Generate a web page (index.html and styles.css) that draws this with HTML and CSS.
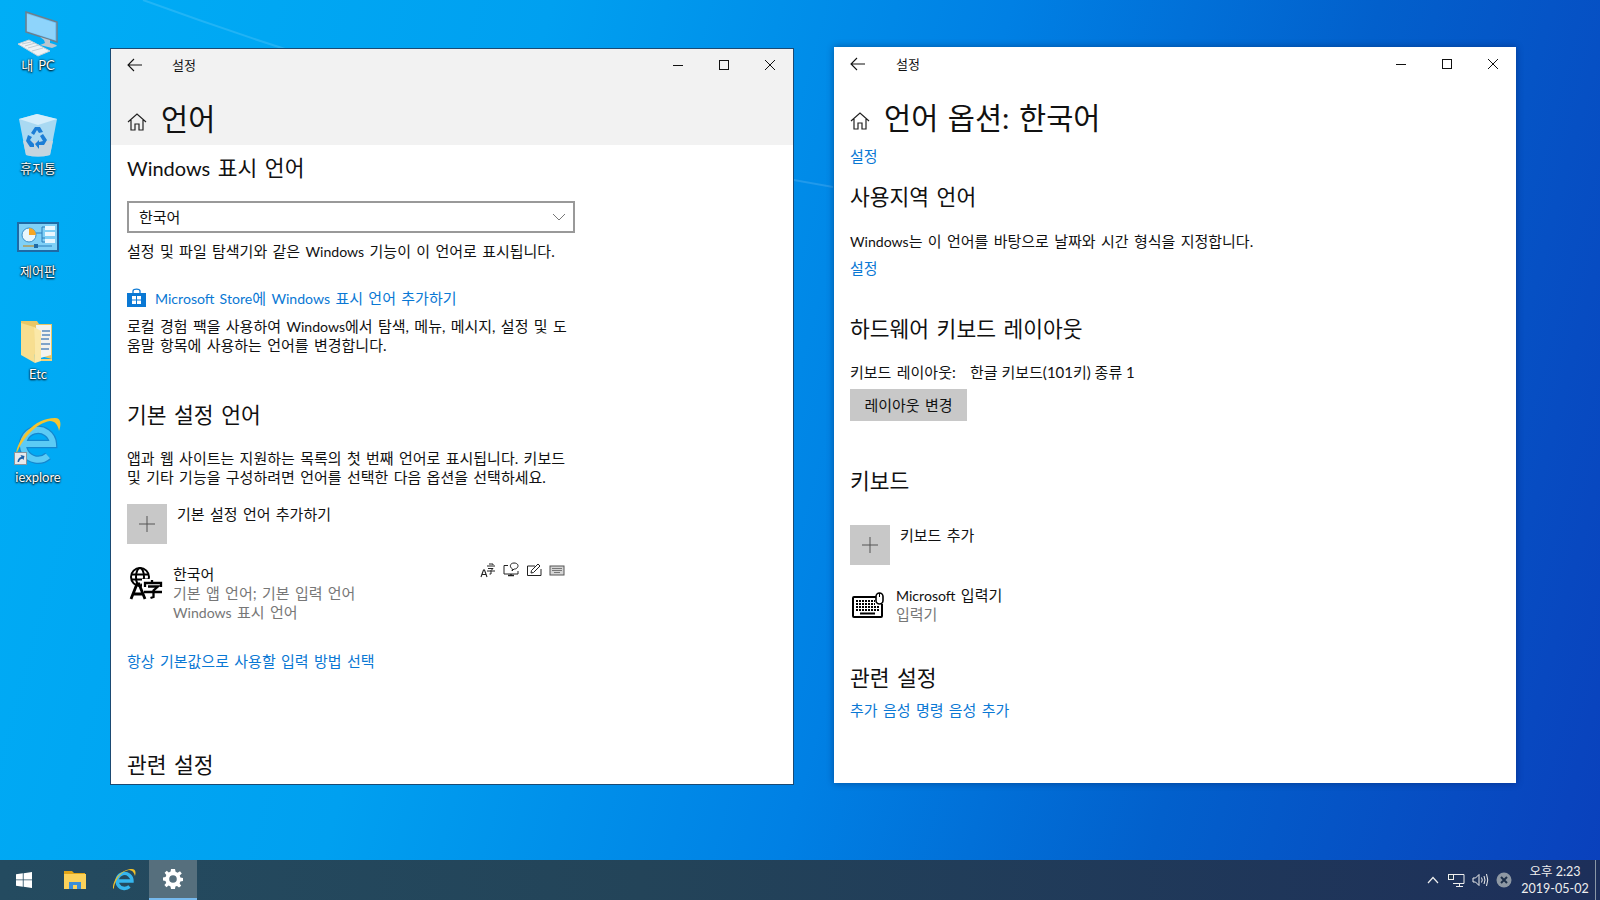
FILE: index.html
```html
<!DOCTYPE html>
<html lang="ko">
<head>
  <meta charset="UTF-8">
  <title>설정 - 언어</title>
  <link rel="stylesheet" href="styles.css">
</head>
<body>
<div class="desktop">
  <svg class="beam" width="1600" height="900" viewBox="0 0 1600 900">
    <path d="M143 0 Q 500 130 833 187" fill="none" stroke="#fff" stroke-opacity="0.13" stroke-width="2"/>
  </svg>

  <!-- 바탕화면 아이콘 -->
  <div class="desk-icons">
    <div class="desk-icon">
      <svg width="48" height="48" viewBox="0 0 48 48">
        <path d="M12 2 L43 12 L43 32 L12 22 Z" fill="#6fc3f7" stroke="#6d7f8c" stroke-width="1.5"/>
        <path d="M13 4 L41 13 L41 30 L13 21 Z" fill="#8ed4fb"/>
        <path d="M26 27 L36 30 L36 33 C40 34 43 35 43 36 L38 38 L26 35 L31 33 L30 30 Z" fill="#b9c6cf"/>
        <path d="M4 34 L15 30 L36 41 L24 46 Z" fill="#eef2f5" stroke="#c6d0d6" stroke-width="1"/>
        <path d="M8 34 L17 32 M11 36 L21 33 M14 38 L25 35 M18 41 L29 38" stroke="#c2cdd4" stroke-width="1"/>
      </svg>
      <span>내 PC</span>
    </div>
    <div class="desk-icon icon-bin">
      <svg width="48" height="48" viewBox="0 0 48 48">
        <path d="M5 8 L23 3 L43 8 L36 44 Q24 47 12 44 Z" fill="#a9d9f2"/>
        <path d="M5 8 L23 3 L43 8 L24 14 Z" fill="#d5eefb"/>
        <path d="M9 30 L39 30 L36 44 Q24 47 12 44 Z" fill="#c4d5df"/>
        <path d="M17 22 L21 16 L26 16 L29 21 L25 22 L23 19 L20 24 Z" fill="#1c7ed6"/>
        <path d="M29 23 L33 29 L30 34 L25 34 L25 38 L21 33 L25 29 L25 31 L29 30 L26 25 Z" fill="#1c7ed6"/>
        <path d="M14 24 L18 26 L16 29 L20 33 L20 36 L16 36 L12 30 Z" fill="#1c7ed6"/>
      </svg>
      <span>휴지통</span>
    </div>
    <div class="desk-icon icon-panel">
      <svg width="48" height="48" viewBox="0 0 48 48">
        <rect x="3" y="8" width="42" height="30" fill="#1f6aa5"/>
        <rect x="5" y="10" width="38" height="26" fill="#7fd0f7"/>
        <circle cx="15" cy="21" r="7" fill="#e8f6fd" stroke="#3a8fc9"/>
        <path d="M15 14 A7 7 0 0 1 22 21 L15 21 Z" fill="#f5a623"/>
        <path d="M22 19 H28 V13 H31 M28 19 V24 H31 M28 24 V28 H31" stroke="#2d7fbc" fill="none"/>
        <rect x="31" y="12" width="10" height="4" fill="#eaf7fe"/>
        <rect x="31" y="18" width="10" height="4" fill="#eaf7fe"/>
        <rect x="31" y="25" width="10" height="4" fill="#eaf7fe"/>
        <path d="M9 32 H38" stroke="#2d7fbc"/>
        <path d="M9 32 H20" stroke="#f5a623"/>
        <rect x="20" y="30" width="4" height="4" fill="#1f6aa5"/>
      </svg>
      <span>제어판</span>
    </div>
    <div class="desk-icon">
      <svg width="48" height="48" viewBox="0 0 48 48">
        <path d="M7 2 L23 2 L25 5 L38 5 L38 40 L7 32 Z" fill="#e9c766"/>
        <path d="M22 6 L37 6 L37 36 L23 40 Z" fill="#f3f3ee"/>
        <path d="M28 12 H36 M28 16 H36 M27 20 H35 M27 25 H36 M27 30 H35" stroke="#7fa4c9" stroke-width="2"/>
        <path d="M7 4 L20 8 L21 44 L7 36 Z" fill="#f7de90"/>
        <path d="M20 8 L27 12 L27 42 L21 44 Z" fill="#fbe8a8"/>
        <path d="M27 40 H38 V42 L27 42 Z" fill="#f2d27a"/>
      </svg>
      <span>Etc</span>
    </div>
    <div class="desk-icon icon-ie">
      <svg width="48" height="48" viewBox="0 0 48 48">
        <path d="M10 27 H39 A15 15 0 1 0 34 39" fill="none" stroke="#1487cf" stroke-width="8.5"/>
        <path d="M10 27 H39 A15 15 0 1 0 34 39" fill="none" stroke="#5ccbf5" stroke-width="6"/>
        <path d="M2 38 C3 22 20 1 41 1 C48 1 47 9 45 14 C44 8 41 4 36 4 C22 6 8 22 2 38 Z" fill="#f4c430"/>
        <rect x="0.5" y="35.5" width="12" height="12" fill="#e6e9ec" stroke="#8a949c"/>
        <path d="M3.5 45 C3.5 42 5.5 40 7.5 40 L6.5 38 L10.5 39 L9.5 43 L8.5 41.8 C7 41.8 5.5 43 5 45 Z" fill="#1a5fa8"/>
      </svg>
      <span>iexplore</span>
    </div>
  </div>

  <!-- 왼쪽 창 -->
  <section class="window window-left">
    <div class="page-head">
      <div class="titlebar">
        <svg class="back" width="16" height="16" viewBox="0 0 16 16"><path d="M7 2 L1 8 L7 14 M1.5 8 H15" fill="none" stroke="#111" stroke-width="1.1"/></svg>
        <span class="title">설정</span>
        <div class="win-buttons">
          <svg width="12" height="12" viewBox="0 0 12 12"><path d="M1 6.5 H11" stroke="#111"/></svg>
          <svg width="12" height="12" viewBox="0 0 12 12"><rect x="1.5" y="1.5" width="9" height="9" fill="none" stroke="#111"/></svg>
          <svg width="12" height="12" viewBox="0 0 12 12"><path d="M1 1 L11 11 M11 1 L1 11" stroke="#111"/></svg>
        </div>
      </div>
      <div class="page-title">
        <svg class="home" width="20" height="20" viewBox="0 0 20 20"><path d="M1 10 L10 2 L19 10 M4 8 V18 H8 V12 H12 V18 H16 V8" fill="none" stroke="#222" stroke-width="1.2"/></svg>
        <h1>언어</h1>
      </div>
    </div>
    <div class="content">
      <h2 class="first"><span class="en">Windows</span> 표시 언어</h2>
      <div class="select">
        <span>한국어</span>
        <svg width="14" height="8" viewBox="0 0 14 8"><path d="M1 1 L7 7 L13 1" fill="none" stroke="#777"/></svg>
      </div>
      <p class="select-note">설정 및 파일 탐색기와 같은 <span class="en">Windows</span> 기능이 이 언어로 표시됩니다.</p>
      <div class="store-link">
        <svg width="19" height="20" viewBox="0 0 19 20">
          <path d="M6 5 V3 C6 0.5 13 0.5 13 3 V5" fill="none" stroke="#0a78d4" stroke-width="1.3"/>
          <path d="M0 5 H19 V19 H0 Z" fill="#0a78d4"/>
          <path d="M5 8 H9 V11.5 H5 Z M10 8 H14 V11.5 H10 Z M5 12.5 H9 V16 H5 Z M10 12.5 H14 V16 H10 Z" fill="#fff"/>
        </svg>
        <a><span class="en">Microsoft Store</span>에 <span class="en">Windows</span> 표시 언어 추가하기</a>
      </div>
      <div class="narrow">
        <p>로컬 경험 팩을 사용하여 <span class="en">Windows</span>에서 탐색, 메뉴, 메시지, 설정 및 도</p>
        <p>움말 항목에 사용하는 언어를 변경합니다.</p>
      </div>

      <h2 class="pref-head">기본 설정 언어</h2>
      <p class="narrow">앱과 웹 사이트는 지원하는 목록의 첫 번째 언어로 표시됩니다. 키보드 및 기타 기능을 구성하려면 언어를 선택한 다음 옵션을 선택하세요.</p>
      <div class="add-row add-pref">
        <div class="plus"><svg width="16" height="16" viewBox="0 0 16 16"><path d="M8 0 V16 M0 8 H16" stroke="#555"/></svg></div>
        <span>기본 설정 언어 추가하기</span>
      </div>
      <div class="lang-row">
        <svg class="lang-icon" width="34" height="34" viewBox="0 0 34 34">
          <circle cx="11" cy="10" r="9" fill="none" stroke="#000" stroke-width="2"/>
          <ellipse cx="11" cy="10" rx="4" ry="9" fill="none" stroke="#000" stroke-width="2"/>
          <path d="M2 7.5 H20 M2 12.5 H20" stroke="#000" stroke-width="2"/>
          <rect x="13" y="12" width="21" height="21" fill="#fff"/>
          <path d="M2 32 L8 17 H10 L16 32 M4.5 27 H13.5" fill="none" stroke="#000" stroke-width="2.8"/>
          <path d="M23 13 V16 M16 20 V16 H32 V20 M19 19.5 H29 L24.5 23.5 V30 L21.5 31 M15 25 H33" fill="none" stroke="#000" stroke-width="2.3"/>
        </svg>
        <div class="lang-text">
          <div>한국어</div>
          <div class="muted">기본 앱 언어; 기본 입력 언어</div>
          <div class="muted"><span class="en">Windows</span> 표시 언어</div>
        </div>
        <div class="lang-feats">
          <svg width="16" height="16" viewBox="0 0 16 16"><path d="M1 15 L3.5 8 H4.5 L7 15 M2 12.5 H6" fill="none" stroke="#222" stroke-width="1.1"/><path d="M7 4 H15 M9 2 H13 V3 M8 6.5 H13 L11 8.5 V12 L9.5 12 M7 9 H15" fill="none" stroke="#222"/></svg>
          <svg width="16" height="16" viewBox="0 0 16 16"><path d="M5 3.5 H1 V12 H15 V9" fill="none" stroke="#222"/><path d="M5 13.5 H11 M8 12 V13.5" stroke="#222" stroke-width="1.4"/><path d="M11 1 C15 1 16 4 14 6 C13 7 12 7 11 7 L9 9 L9.5 7 C6 5 7 1 11 1 Z" fill="#fff" stroke="#222"/></svg>
          <svg width="16" height="16" viewBox="0 0 16 16"><path d="M9 4 H1.5 V13.5 H15 V7" fill="none" stroke="#222"/><path d="M5 11 L5.5 8.5 L12 2 L14 4 L7.5 10.5 Z" fill="#fff" stroke="#222"/></svg>
          <svg width="16" height="16" viewBox="0 0 16 16"><rect x="1" y="4" width="14" height="9" fill="#d5d5d5" stroke="#555"/><path d="M3 6.5 H13 M3 8.5 H13 M5 10.5 H11" stroke="#777"/></svg>
        </div>
      </div>
      <a class="link always-link">항상 기본값으로 사용할 입력 방법 선택</a>
      <h2 class="related-left">관련 설정</h2>
    </div>
  </section>

  <!-- 오른쪽 창 -->
  <section class="window window-right">
    <div class="titlebar">
      <svg class="back" width="16" height="16" viewBox="0 0 16 16"><path d="M7 2 L1 8 L7 14 M1.5 8 H15" fill="none" stroke="#111" stroke-width="1.1"/></svg>
      <span class="title">설정</span>
      <div class="win-buttons">
        <svg width="12" height="12" viewBox="0 0 12 12"><path d="M1 6.5 H11" stroke="#111"/></svg>
        <svg width="12" height="12" viewBox="0 0 12 12"><rect x="1.5" y="1.5" width="9" height="9" fill="none" stroke="#111"/></svg>
        <svg width="12" height="12" viewBox="0 0 12 12"><path d="M1 1 L11 11 M11 1 L1 11" stroke="#111"/></svg>
      </div>
    </div>
    <div class="page-title">
      <svg class="home" width="20" height="20" viewBox="0 0 20 20"><path d="M1 10 L10 2 L19 10 M4 8 V18 H8 V12 H12 V18 H16 V8" fill="none" stroke="#222" stroke-width="1.2"/></svg>
      <h1>언어 옵션: 한국어</h1>
    </div>
    <div class="content">
      <a class="link">설정</a>
      <h2 class="region-head">사용지역 언어</h2>
      <p class="region-note"><span class="en">Windows</span>는 이 언어를 바탕으로 날짜와 시간 형식을 지정합니다.</p>
      <a class="link region-link">설정</a>
      <h2 class="hw-head">하드웨어 키보드 레이아웃</h2>
      <p class="hw-note">키보드 레이아웃: <span class="hw-value">한글 키보드(101키) 종류 1</span></p>
      <div class="button">레이아웃 변경</div>
      <h2 class="kb-head">키보드</h2>
      <div class="add-row add-kb">
        <div class="plus"><svg width="16" height="16" viewBox="0 0 16 16"><path d="M8 0 V16 M0 8 H16" stroke="#555"/></svg></div>
        <span>키보드 추가</span>
      </div>
      <div class="ime-row">
        <svg width="32" height="26" viewBox="0 0 32 26">
          <path d="M24 5 H2 Q1 5 1 6 V24 Q1 25 2 25 H29 Q30 25 30 24 V12" fill="none" stroke="#000" stroke-width="2"/>
          <rect x="24" y="1" width="7" height="11" rx="3.5" fill="#fff" stroke="#000" stroke-width="1.6"/>
          <path d="M27.5 1 V5" stroke="#000"/>
          <path d="M4 9 H23 M4 12 H23 M4 15 H27 M4 18 H27" stroke="#000" stroke-width="1.8" stroke-dasharray="2 1"/>
          <path d="M8 21.5 H23" stroke="#000" stroke-width="2"/>
        </svg>
        <div class="ime-text">
          <div><span class="en">Microsoft</span> 입력기</div>
          <div class="muted">입력기</div>
        </div>
      </div>
      <h2 class="related-right">관련 설정</h2>
      <a class="link">추가 음성 명령 음성 추가</a>
    </div>
  </section>

  <!-- 작업 표시줄 -->
  <footer class="taskbar">
    <div class="task-item task-start">
      <svg width="16" height="16" viewBox="0 0 16 16"><path d="M0 2.3 L6.8 1.3 V7.5 H0 Z M7.6 1.2 L16 0 V7.5 H7.6 Z M0 8.3 H6.8 V14.7 L0 13.7 Z M7.6 8.3 H16 V16 L7.6 14.8 Z" fill="#fff"/></svg>
    </div>
    <div class="task-item">
      <svg width="22" height="18" viewBox="0 0 22 18">
        <path d="M0 0 H8 L10 2 H21 V5 H0 Z" fill="#e2a517"/>
        <path d="M0 3 H22 V18 H0 Z" fill="#fcd25a"/>
        <path d="M5 18 V11 H17 V18 H13 V14 H9 V18 Z" fill="#3b8ed8"/>
      </svg>
    </div>
    <div class="task-item">
      <svg width="24" height="24" viewBox="0 0 24 24">
        <path d="M6 13 H20 A7.5 7.5 0 1 0 17.5 18.5" fill="none" stroke="#35b6ee" stroke-width="3.4"/>
        <path d="M1 20 C1 11 10 1 20 1 C24 1 24 5 23 8 C22 4 20 2 17 2 C10 3 4 10 2 19 L2 21 Z" fill="#f0c02a"/>
      </svg>
    </div>
    <div class="task-item task-active">
      <svg width="20" height="20" viewBox="0 0 20 20">
        <path fill="#fff" fill-rule="evenodd" d="M8 0 H12 L12.6 2.8 L14.6 3.7 L17 2.2 L18.8 4.6 L16.7 6.4 L17.4 8.4 L20 9 V12 L17.4 12.4 L16.6 14.4 L18.2 16.8 L16 18.6 L14 17 L12.4 17.5 L12 20 H8 L7.5 17.4 L5.6 16.6 L3.4 18.2 L1.4 16 L3.2 14 L2.5 12 L0 11.6 V8.4 L2.6 8 L3.3 6 L1.6 3.8 L3.8 1.8 L5.8 3.4 L7.6 2.6 Z M10 6.2 A3.8 3.8 0 1 0 10 13.8 A3.8 3.8 0 1 0 10 6.2 Z"/>
      </svg>
    </div>
    <div class="tray">
      <svg class="chevron" width="12" height="8" viewBox="0 0 12 8"><path d="M1 7 L6 1.5 L11 7" fill="none" stroke="#eee" stroke-width="1.2"/></svg>
      <svg width="17" height="15" viewBox="0 0 17 15"><path d="M5 1.5 H16 V10.5 H5 M8 13.5 H15 M11.5 10.5 V13.5" fill="none" stroke="#eee"/><rect x="0.5" y="1.5" width="5" height="5" fill="#22384f" stroke="#eee"/></svg>
      <svg width="17" height="14" viewBox="0 0 17 14"><path d="M1 5 H3.5 L7 1.5 V12.5 L3.5 9 H1 Z" fill="none" stroke="#eee"/><path d="M9.5 4.5 Q11 7 9.5 9.5 M12 3 Q14 7 12 11 M14.5 1 Q17 7 14.5 13" fill="none" stroke="#eee"/></svg>
      <svg width="16" height="16" viewBox="0 0 16 16"><circle cx="8" cy="8" r="7.5" fill="#8e98a3"/><path d="M5 5 L11 11 M11 5 L5 11" stroke="#1d2f48" stroke-width="2"/></svg>
      <div class="clock">
        <div>오후 2:23</div>
        <div>2019-05-02</div>
      </div>
      <div class="show-desktop"></div>
    </div>
  </footer>
</div>
</body>
</html>
```

FILE: styles.css
```css
* {
  box-sizing: border-box;
}
html, body {
  margin: 0;
  height: 100%;
  overflow: hidden;
}
body {
  font-family: "Lato", "Noto Sans CJK KR", sans-serif;
  font-size: 15px;
  line-height: 19px;
  word-spacing: 1.5px;
  color: #111;
}
.en {
  font-size: 14.1px;
}
.desktop {
  position: relative;
  width: 1600px;
  height: 900px;
  overflow: hidden;
  background: linear-gradient(105deg, #00aef6 0%, #00a0f0 30%, #0080e4 55%, #0260cc 75%, #0a40bc 100%);
}
.beam {
  position: absolute;
  left: 0;
  top: 0;
}

/* 바탕화면 아이콘 */
.desk-icons {
  position: absolute;
  left: 0;
  top: 10px;
  width: 76px;
  display: flex;
  flex-direction: column;
  gap: 35px;
}
.desk-icon {
  display: flex;
  flex-direction: column;
  align-items: center;
  height: 68px;
  color: #fff;
  font-size: 13px;
  line-height: 16px;
  text-shadow: 0 1px 2px #000, 0 0 2px #000;
}
.desk-icon span {
  margin-top: -1px;
}
.icon-bin svg, .icon-panel svg {
  margin-top: -2px;
  margin-bottom: 2px;
}
.icon-ie svg {
  margin-top: -5px;
  margin-bottom: 5px;
}

/* 창 */
.window {
  position: absolute;
  background: #fff;
  overflow: hidden;
}
.window-left {
  left: 110px;
  top: 48px;
  width: 684px;
  height: 737px;
  border: 1px solid #1b4a73;
}
.window-right {
  left: 834px;
  top: 47px;
  width: 682px;
  height: 736px;
  box-shadow: 0 0 7px rgba(0, 20, 70, 0.45);
}
.page-head {
  height: 96px;
  background: #f2f2f2;
}
.titlebar {
  height: 32px;
  display: flex;
  align-items: center;
  padding-left: 16px;
}
.window-right .titlebar {
  margin-top: 1px;
}
.back {
  flex: none;
}
.title {
  margin-left: 29px;
  font-size: 13px;
}
.window-right .title {
  margin-left: 30px;
}
.win-buttons {
  margin-left: auto;
  display: flex;
  gap: 34px;
  padding-right: 17px;
}
.page-title {
  display: flex;
  align-items: center;
  height: 45px;
  margin-top: 15px;
  padding-left: 16px;
}
.home {
  margin-top: 6px;
}
h1 {
  margin: 0 0 0 14px;
  font-size: 29.5px;
  font-weight: 400;
  line-height: 40px;
  word-spacing: 2px;
}
h2 {
  margin: 0;
  font-size: 21.5px;
  font-weight: 400;
  line-height: 28px;
  word-spacing: 2px;
}
h2 .en {
  font-size: 20px;
}
p {
  margin: 0;
}
a, .link {
  color: #0a78d4;
}
.muted {
  color: #777;
}
.content {
  padding-left: 16px;
}
.link {
  display: block;
}

/* 왼쪽 창 */
.first {
  margin-top: 9px;
}
.select {
  display: flex;
  align-items: center;
  justify-content: space-between;
  width: 448px;
  height: 32px;
  margin-top: 19px;
  padding: 0 7px 0 10px;
  border: 2px solid #999;
}
.select-note {
  margin-top: 9px;
}
.store-link {
  display: flex;
  align-items: center;
  gap: 9px;
  margin-top: 27px;
}
.narrow {
  width: 441px;
  margin-top: 9px;
  white-space: nowrap;
}
.pref-head {
  margin-top: 46px;
}
.pref-head + .narrow {
  margin-top: 20px;
  white-space: normal;
  word-break: keep-all;
}
.add-row {
  display: flex;
  align-items: flex-start;
  gap: 10px;
}
.add-row span {
  padding-top: 1px;
}
.plus {
  width: 40px;
  height: 40px;
  display: flex;
  align-items: center;
  justify-content: center;
  background: #c8c8c8;
}
.add-pref {
  margin-top: 17px;
}
.lang-row {
  display: flex;
  align-items: flex-start;
  width: 440px;
  margin-top: 21px;
}
.lang-icon {
  margin: 2px 0 0 2px;
}
.lang-text {
  margin-left: 10px;
}
.lang-feats {
  margin-left: auto;
  margin-top: -3px;
  display: flex;
  gap: 7px;
  margin-right: 2px;
}
.always-link {
  margin-top: 30px;
}
.related-left {
  margin-top: 80px;
}

/* 오른쪽 창 */
.window-right .content {
  padding-top: 7px;
}
.region-head {
  margin-top: 17px;
}
.region-note {
  margin-top: 21px;
}
.region-link {
  margin-top: 8px;
}
.hw-head {
  margin-top: 37px;
}
.hw-note {
  margin-top: 20px;
}
.hw-value {
  margin-left: 9px;
  word-spacing: 0;
}
.button {
  width: 117px;
  height: 32px;
  margin-top: 7px;
  background: #c8c8c8;
  line-height: 32px;
  text-align: center;
}
.kb-head {
  margin-top: 46px;
}
.add-kb {
  margin-top: 30px;
}
.ime-row {
  display: flex;
  align-items: center;
  gap: 12px;
  margin-top: 21px;
  padding-left: 2px;
}
.related-right {
  margin-top: 40px;
}
.related-right + .link {
  margin-top: 9px;
}

/* 작업 표시줄 */
.taskbar {
  position: absolute;
  left: 0;
  bottom: 0;
  width: 100%;
  height: 40px;
  display: flex;
  padding-left: 1px;
  background: linear-gradient(90deg, #244b60 0%, #234459 40%, #1d2f5a 100%);
  color: #eee;
}
.task-item {
  width: 49px;
  display: flex;
  align-items: center;
  justify-content: center;
}
.task-start svg {
  margin-right: 3px;
}
.task-active {
  width: 48px;
  margin-left: 1px;
  background: #566f7d;
  border-bottom: 2px solid #76b9ed;
}
.tray {
  margin-left: auto;
  display: flex;
  align-items: center;
  gap: 7px;
}
.chevron {
  margin-right: 2px;
}
.clock {
  width: 70px;
  margin-left: 1px;
  font-size: 12.5px;
  line-height: 17px;
  word-spacing: 0;
  text-align: center;
}
.show-desktop {
  width: 5px;
  height: 40px;
  margin-left: -2px;
  border-left: 1px solid #8a97a6;
}
```
